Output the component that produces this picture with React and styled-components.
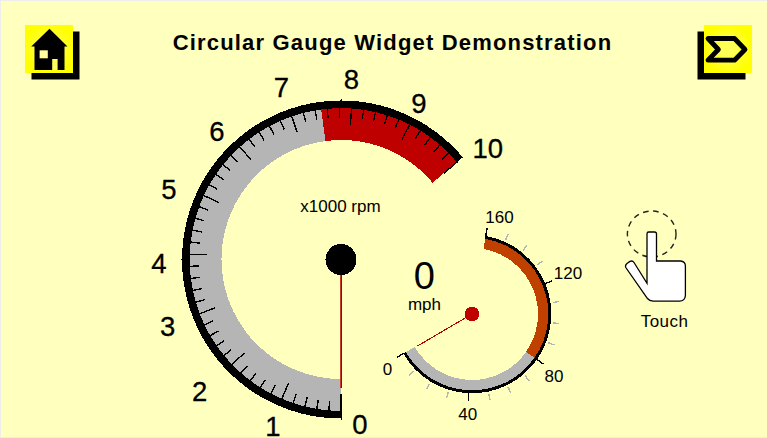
import React from 'react';
import styled, { createGlobalStyle } from 'styled-components';

const GlobalStyle = createGlobalStyle`
  * { box-sizing: border-box; }
  body { margin: 0; overflow: hidden; }
`;

const Screen = styled.main`
  width: 767px;
  height: 438px;
  display: flex;
  flex-direction: column;
  background: #ffffbe;
  border: solid #ededed;
  border-width: 1px 0 1px 1px;
  font-family: 'Liberation Sans', Arial, sans-serif;
  color: #000;
`;

const Header = styled.header`
  height: 64px;
  flex: none;
  display: flex;
  align-items: flex-start;
  justify-content: space-between;
  padding: 24px 15px 0 24px;
`;

const Title = styled.h1`
  margin: 5px 0 0 8px;
  font-size: 22px;
  line-height: 25px;
  font-weight: 700;
  letter-spacing: 1.18px;
  white-space: nowrap;
`;

const IconButton = styled.button`
  width: 48px;
  height: 48px;
  flex: none;
  padding: 0;
  border: 0;
  background: radial-gradient(circle, #ffff55 20%, #ffff00 72%);
  box-shadow: ${({ $shadowX }) => $shadowX}px 6.5px 0 #000;
  svg { display: block; }
`;

const Body = styled.section`
  display: flex;
  flex: 1;
`;

const Dashboard = styled.svg`
  flex: none;
  display: block;
  overflow: visible;
`;

const GaugeLabel = styled.text`
  font-size: ${({ $size }) => $size}px;
  text-anchor: middle;
  fill: #000;
  stroke: #000;
  stroke-width: ${({ $weight = 0 }) => $weight}px;
`;

const TouchPanel = styled.div`
  width: 84px;
  margin: 144px 0 0 21px;
  display: flex;
  flex-direction: column;
  align-items: center;
`;

const TouchLabel = styled.span`
  margin: 9px 0 0 17px;
  font-size: 17px;
  line-height: 20px;
  letter-spacing: 0.45px;
`;

// Angles are measured in degrees clockwise from straight down.
const polar = (cx, cy, r, deg) => {
  const a = (deg * Math.PI) / 180;
  return [cx - r * Math.sin(a), cy + r * Math.cos(a)];
};

const bandPath = (cx, cy, inner, outer, from, to) => {
  const large = Math.abs(to - from) > 180 ? 1 : 0;
  const sweep = to > from ? 1 : 0;
  const a = polar(cx, cy, outer, from);
  const b = polar(cx, cy, outer, to);
  const c = polar(cx, cy, inner, to);
  const d = polar(cx, cy, inner, from);
  return `M${a} A${outer} ${outer} 0 ${large} ${sweep} ${b} L${c} A${inner} ${inner} 0 ${large} ${1 - sweep} ${d}Z`;
};

const Band = ({ cx, cy, inner, outer, from, to, color }) => (
  <path d={bandPath(cx, cy, inner, outer, from, to)} fill={color} shapeRendering="crispEdges" />
);

const Tick = ({ cx, cy, inner, outer, angle, color = '#000', width = 1.4 }) => {
  const [x1, y1] = polar(cx, cy, inner, angle);
  const [x2, y2] = polar(cx, cy, outer, angle);
  return <line x1={x1} y1={y1} x2={x2} y2={y2} stroke={color} strokeWidth={width} shapeRendering="crispEdges" />;
};

const RPM = { cx: 341, cy: 259.5 };
const RPM_LABELS = [
  ['0', 359.8, 434], ['1', 273, 435.5], ['2', 199.7, 400.5], ['3', 167.6, 336],
  ['4', 158.8, 272.5], ['5', 169, 198.5], ['6', 217, 141], ['7', 281.3, 96.5],
  ['8', 351.5, 88.5], ['9', 419, 112.5], ['10', 487.8, 157.5],
];

const MPH = { cx: 472, cy: 314 };
const MPH_LABELS = [
  ['0', 387.5, 375], ['40', 467.7, 419.7], ['80', 554, 381.5],
  ['120', 568, 279], ['160', 499.5, 223],
];

const RpmGauge = () => (
  <g>
    <Band {...RPM} inner={119.5} outer={152} from={0} to={172.5} color="#b5b5b5" />
    <Band {...RPM} inner={119.5} outer={152} from={172.5} to={230} color="#be0000" />
    <Band {...RPM} inner={151.3} outer={159} from={0} to={230} color="#000" />
    {Array.from({ length: 51 }, (_, i) => (
      <Tick key={i} {...RPM} angle={i * 4.6} inner={i % 5 ? 142 : 134.5} outer={153} />
    ))}
    <path d="M341 395v25M341 98.5v4M180.5 259.5h4M458 159l4.5-2" stroke="#000" shapeRendering="crispEdges" />
    <path d="M340.5 274V388" stroke="#c53a2b" strokeWidth="1" />
    <path d="M341.5 274V388" stroke="#a80000" strokeWidth="1" />
    <circle {...RPM} r="15.5" shapeRendering="crispEdges" />
    {RPM_LABELS.map(([t, x, y]) => (
      <GaugeLabel key={t} x={x} y={y} $size={27.5} $weight={0.3}>{t}</GaugeLabel>
    ))}
    <GaugeLabel x="340.5" y="212" $size={17}>x1000 rpm</GaugeLabel>
  </g>
);

const MphGauge = () => (
  <g>
    {Array.from({ length: 17 }, (_, i) => {
      const major = i % 4 === 0;
      return (
        <Tick
          key={i}
          {...MPH}
          angle={60 - i * 14.375}
          inner={major ? 78 : 81.5}
          outer={major ? 87 : 88}
          color={major ? '#000' : '#b5b5b5'}
        />
      );
    })}
    <Band {...MPH} inner={66} outer={77} from={60} to={-55} color="#b5b5b5" />
    <Band {...MPH} inner={66} outer={77} from={-55} to={-170} color="#c04000" />
    <Band {...MPH} inner={76.3} outer={79.3} from={60} to={-170} color="#000" />
    <path d="M472 314L417.5 346" stroke="#b80000" strokeWidth="1.1" shapeRendering="crispEdges" />
    <circle {...MPH} r="7.4" fill="#be0000" shapeRendering="crispEdges" />
    {MPH_LABELS.map(([t, x, y]) => (
      <GaugeLabel key={t} x={x} y={y} $size={17}>{t}</GaugeLabel>
    ))}
    <GaugeLabel x="424.3" y="289" $size={38}>0</GaugeLabel>
    <GaugeLabel x="424.5" y="310" $size={17}>mph</GaugeLabel>
  </g>
);

const HomeIcon = () => (
  <svg width="48" height="48" viewBox="25 25 48 48">
    <path d="M49.5 28.8L67.5 46.5H64.5V70H34.5V46.5H31.2Z" />
    <rect x="39.6" y="50.3" width="8.2" height="8" fill="#ffff9c" />
    <rect x="52.2" y="59" width="5.4" height="11" fill="#ffff60" />
  </svg>
);

const NextIcon = () => (
  <svg width="48" height="48" viewBox="704 25 48 48">
    <path d="M708 38.5H734.5L745 49.5L734.5 60.2H708L718.4 49.5Z" fill="none" stroke="#000" strokeWidth="4.8" strokeLinejoin="round" />
  </svg>
);

const TouchIcon = () => (
  <svg width="84" height="94" viewBox="614 209 84 94">
    <ellipse cx="651.7" cy="234" rx="24.3" ry="23" fill="none" stroke="#222" strokeWidth="1.4" strokeDasharray="5.6 4.6" />
    <path
      d="M647 233.8Q647 232 648.8 232H654.5Q656.5 232 656.5 234V261H680.5Q685.4 261.5 685.4 266V295.5Q685 301 679.5 301.2H653Q649.5 301 647.5 298.5L625.8 267.5Q624.8 265 627.3 263.2L630 261.4Q632.5 260.2 634 262.5L647 283.3Z"
      fill="#fff" stroke="#000" strokeWidth="1.3"
    />
  </svg>
);

export default function App() {
  return (
    <>
      <GlobalStyle />
      <Screen>
        <Header>
          <IconButton $shadowX={6.5} aria-label="Home"><HomeIcon /></IconButton>
          <Title>Circular Gauge Widget Demonstration</Title>
          <IconButton $shadowX={-6.5} aria-label="Next"><NextIcon /></IconButton>
        </Header>
        <Body>
          <Dashboard width="592" height="372" viewBox="1 65 592 372">
            <RpmGauge />
            <MphGauge />
          </Dashboard>
          <TouchPanel>
            <TouchIcon />
            <TouchLabel>Touch</TouchLabel>
          </TouchPanel>
        </Body>
      </Screen>
    </>
  );
}
